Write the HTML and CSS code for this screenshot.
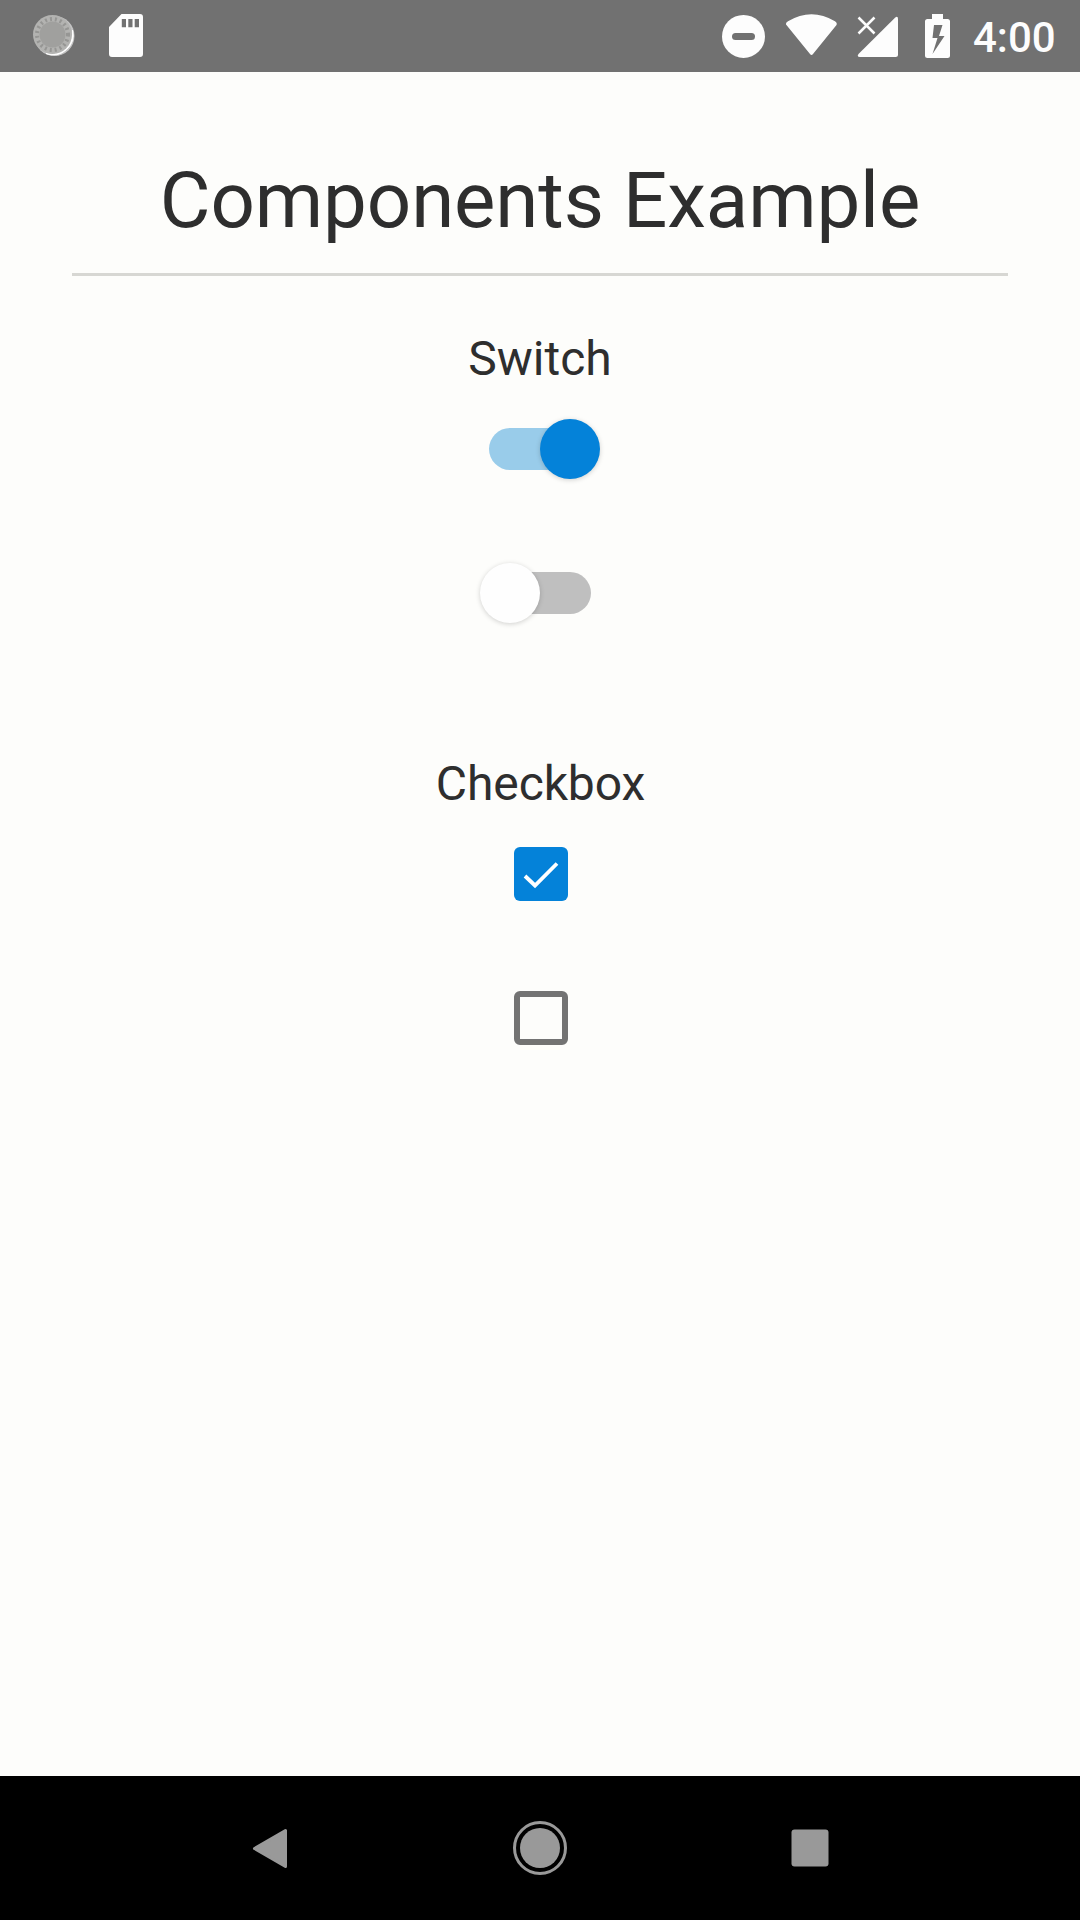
FILE: index.html
```html
<!DOCTYPE html>
<html lang="en">
<head>
<meta charset="utf-8">
<title>Components Example</title>
<link rel="stylesheet" href="styles.css">
</head>
<body>
<header class="status">
  <div class="status-group">
    <svg class="spinner" viewBox="31 12 46 48" width="46" height="48">
      <circle cx="54.5" cy="36" r="20" fill="#c4c4c4"/>
      <path d="M72.5 30A20 20 0 0 1 46 53.5Q55 56 63 50Q72 43 72.5 30Z" fill="#fff" stroke="#fff"/>
      <circle cx="52.5" cy="34.5" r="19.5" fill="#b3b3b1"/>
      <circle cx="52.5" cy="34.5" r="15.5" fill="none" stroke="#969694" stroke-width="4" stroke-dasharray="2 3"/>
      <circle cx="52.5" cy="34.5" r="13" fill="#a0a09e"/>
    </svg>
    <svg viewBox="109 14 34 43" width="34" height="43">
      <path fill="#fdfdfd" fill-rule="evenodd" d="M121.5 14H140Q143 14 143 17V54Q143 57 140 57H112Q109 57 109 54V27ZM121.8 19V27.3H126V19ZM128.3 19V27.3H132.5V19ZM134.7 19V27.3H139V19Z"/>
    </svg>
  </div>
  <div class="status-group status-right">
    <svg viewBox="722 14 43 44" width="43" height="44">
      <circle cx="743.5" cy="36.4" r="21.5" fill="#fdfdfd"/>
      <rect x="732" y="33" width="23" height="7" rx="3.5" fill="#717171"/>
    </svg>
    <svg class="wifi" viewBox="785 14 53 42" width="53" height="42">
      <path fill="#fdfdfd" d="M786 24.5Q785.5 22.6 788 21.3Q811.5 7.2 835 21.3Q837.5 22.8 836.5 25L813 54Q811.5 56 810 54Z"/>
    </svg>
    <svg class="signal" viewBox="857 16 42 42" width="42" height="42">
      <path fill="#fdfdfd" d="M895 17.7Q898 15.5 898 19V54.5Q898 57 895.5 57H860Q856.5 57 858.5 54Z"/>
      <path fill="none" stroke="#fdfdfd" stroke-width="2.5" d="M858.5 17.5L874.5 33.5M874.5 17.5L858.5 33.5"/>
    </svg>
    <svg class="battery" viewBox="925 14 25 44" width="25" height="44">
      <path fill="#fdfdfd" fill-rule="evenodd" d="M932 14H943V19H947.5Q950 19 950 21.5V55.5Q950 58 947.5 58H927.5Q925 58 925 55.5V21.5Q925 19 927.5 19H932ZM934 25L932.5 38H937.5L932.5 54L944.5 36H939L942.5 25Z"/>
    </svg>
    <span class="clock">4:00</span>
  </div>
</header>
<main class="content">
  <h1 class="title">Components Example</h1>
  <section class="section">
    <h2 class="label">Switch</h2>
    <div class="slot"><div class="switch on"><span class="thumb"></span></div></div>
    <div class="slot"><div class="switch"><span class="thumb"></span></div></div>
  </section>
  <section class="section checks">
    <h2 class="label">Checkbox</h2>
    <div class="slot">
      <div class="checkbox checked">
        <svg viewBox="0 0 54 54" width="54" height="54"><path d="M11 29L21 38.5L43 16.5" fill="none" stroke="#fff" stroke-width="3.8"/></svg>
      </div>
    </div>
    <div class="slot"><div class="checkbox"></div></div>
  </section>
</main>
<nav class="nav">
  <svg viewBox="0 0 60 60" width="60" height="60"><path d="M14.5 30.5L45.5 12.5V48.5Z" fill="#999" stroke="#999" stroke-width="3" stroke-linejoin="round"/></svg>
  <svg viewBox="0 0 60 60" width="60" height="60"><circle cx="30" cy="30" r="20" fill="#999"/><circle cx="30" cy="30" r="25.5" fill="none" stroke="#999" stroke-width="3"/></svg>
  <svg viewBox="0 0 60 60" width="60" height="60"><rect x="11.5" y="11.5" width="37" height="37" rx="3" fill="#999"/></svg>
</nav>
</body>
</html>
```
FILE: styles.css
```css
* { box-sizing: border-box; }
body {
  margin: 0;
  width: 1080px;
  height: 1920px;
  display: flex;
  flex-direction: column;
  overflow: hidden;
  background: #fdfdfb;
  color: #2e2e2e;
  font-family: Roboto, sans-serif;
}
svg { display: block; flex: none; }
.status {
  height: 72px;
  padding: 0 24px 0 31px;
  display: flex;
  justify-content: space-between;
  background: #717171;
  color: #fdfdfd;
}
.status-group { display: flex; align-items: flex-start; padding-top: 14px; gap: 32px; }
.spinner { margin-top: -2px; }
.status-right { gap: 0; }
.wifi { margin-left: 20px; }
.signal { margin: 2px 0 0 19px; }
.battery { margin-left: 26px; }
.clock {
  width: 106px;
  padding-left: 23px;
  font-size: 42px;
  line-height: 48px;
  font-weight: 500;
  white-space: nowrap;
}
.content { flex: 1; padding: 72px 72px 0; }
.title {
  height: 132px;
  margin: 0;
  border-bottom: 3px solid #d7d7d3;
  font-size: 78px;
  line-height: 114px;
  font-weight: 400;
  letter-spacing: -.12px;
  text-align: center;
}
.section {
  display: flex;
  flex-direction: column;
  align-items: center;
  padding-top: 55px;
}
.checks { padding: 91px 0 0 1px; }
.label { margin: 0; font-size: 48px; line-height: 56px; font-weight: 400; }
.checks .label { letter-spacing: -.12px; }
.slot { height: 144px; display: flex; align-items: center; justify-content: center; }
.label + .slot { margin-top: -10px; }
.checks .slot { padding-left: 1px; }
.switch {
  width: 102px;
  height: 42px;
  border-radius: 21px;
  display: flex;
  align-items: center;
  background: #bfbfbf;
}
.thumb {
  flex: none;
  width: 60px;
  height: 60px;
  margin-left: -9px;
  border-radius: 50%;
  background: #fefefe;
  box-shadow: 0 1px 5px rgba(0, 0, 0, .18);
}
.switch.on { background: #99ccea; }
.switch.on .thumb { margin-left: 51px; background: #0482d9; }
.checkbox { width: 54px; height: 54px; border: 6px solid #737373; border-radius: 6px; }
.checkbox.checked { border: 0; background: #0482d9; }
.nav {
  height: 144px;
  display: flex;
  align-items: center;
  justify-content: center;
  gap: 210px;
  background: #000;
}
```
